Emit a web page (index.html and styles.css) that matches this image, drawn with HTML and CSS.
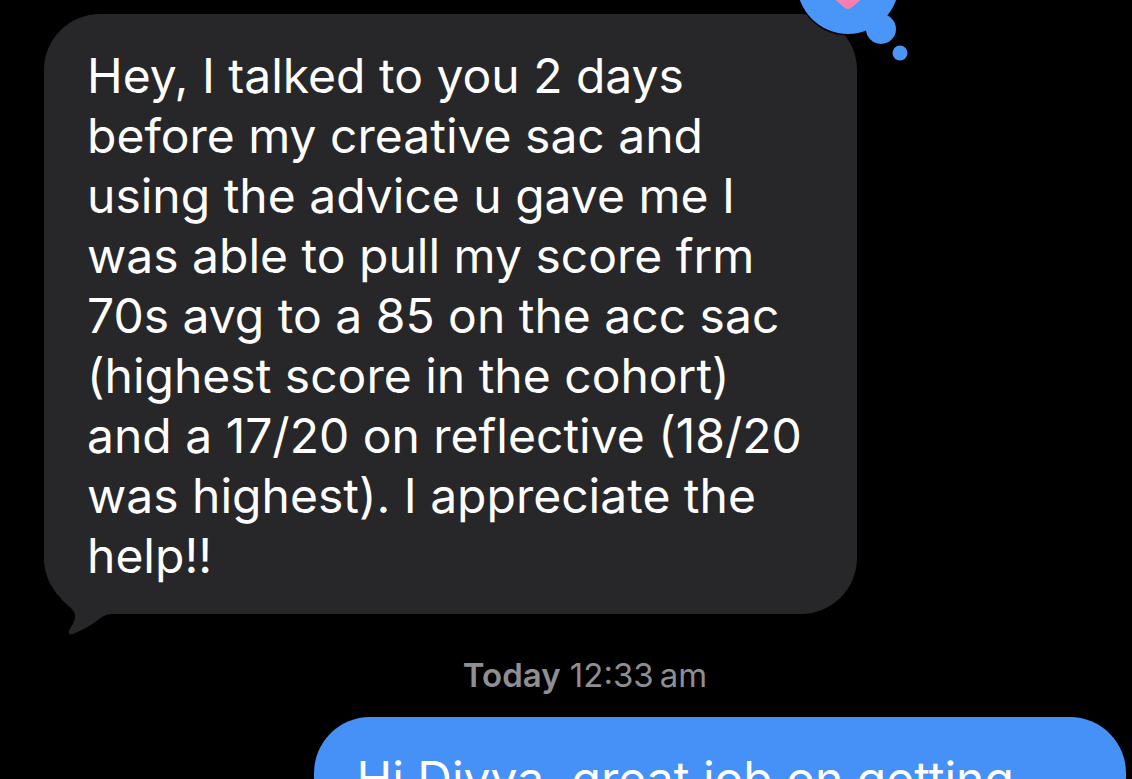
FILE: index.html
```
<!DOCTYPE html>
<html lang="en">
<head>
  <meta charset="UTF-8" />
  <meta name="viewport" content="width=device-width, initial-scale=1.0" />
  <title>Messages</title>
  <link rel="stylesheet" href="styles.css">
</head>
<body>
  <main class="chat">
    <div class="message received">
      <p class="text">Hey, I talked to you 2 days<br>
        before my creative sac and<br>
        using the advice u gave me I<br>
        was able to pull my score frm<br>
        70s avg to a 85 on the acc sac<br>
        (highest score in the cohort)<br>
        and a 17/20 on reflective (18/20<br>
        was highest). I appreciate the<br>
        help!!</p>

      <svg class="tail" width="60" height="44" viewBox="0 0 60 44" aria-hidden="true">
        <path d="M10 4 L7 8 C15 16 20 18 21 24 C22 31 16 36 15 40 C14 43 16 44 19 43 C29 39 37 34 44 29 C49 25 53 23 60 23 L60 4 Z" fill="#272729"/>
      </svg>

      <!-- heart reaction -->
      <svg class="reaction" width="112" height="134" viewBox="0 0 112 134" role="img" aria-label="Heart reaction">
        <defs>
          <linearGradient id="heart" x1="0" y1="0" x2="0" y2="1">
            <stop offset="0" stop-color="#ff9cc4"/>
            <stop offset="1" stop-color="#f779ac"/>
          </linearGradient>
        </defs>
        <circle cx="52" cy="55" r="52.5" fill="#000"/>
        <circle cx="85" cy="101" r="15" fill="#4a95f8"/>
        <circle cx="104" cy="125" r="7.5" fill="#4a95f8"/>
        <circle cx="52" cy="55" r="51" fill="#4a95f8"/>
        <path d="M52 80.5 C50 80.5 49 79.5 38 70 C28 61 21 53 21 43 C21 24 43 22 52 37 C61 22 83 24 83 43 C83 53 76 61 66 70 C55 79.5 54 80.5 52 80.5 Z" fill="url(#heart)" stroke="#f58fb8" stroke-width="1"/>
      </svg>
    </div>

    <div class="timestamp"><strong>Today</strong> 12:33&#8201;am</div>

    <div class="message sent">
      <p class="text">Hi Divya, great job on getting</p>
    </div>
  </main>
</body>
</html>
```
FILE: styles.css
```
* {
  box-sizing: border-box;
}

body {
  margin: 0;
  background: #000;
  color: #fff;
  font-family: Inter, "Liberation Sans", sans-serif;
}

.chat {
  display: flex;
  flex-direction: column;
  height: 100vh;
  padding: 14px 6px 0 44px;
  overflow: hidden;
}

.message {
  position: relative;
  flex-shrink: 0;
  width: calc(75% + 1px);
  padding: 32px 43px 28px;
  border-radius: 56px;
}

.text {
  margin: 0;
  font-size: 48px;
  line-height: 60px;
  white-space: nowrap;
}

.received {
  background: #272729;
}

.sent {
  align-self: flex-end;
  background: #4591f7;
}

.tail {
  position: absolute;
  left: 10px;
  bottom: -21px;
}

.reaction {
  position: absolute;
  top: -86px;
  right: -51px;
  overflow: visible;
}

.timestamp {
  flex-shrink: 0;
  margin: 41px 0 22px;
  color: #8e8e93;
  font-size: 33px;
  line-height: 40px;
  text-align: center;
}

.timestamp strong {
  font-weight: 600;
}
```
